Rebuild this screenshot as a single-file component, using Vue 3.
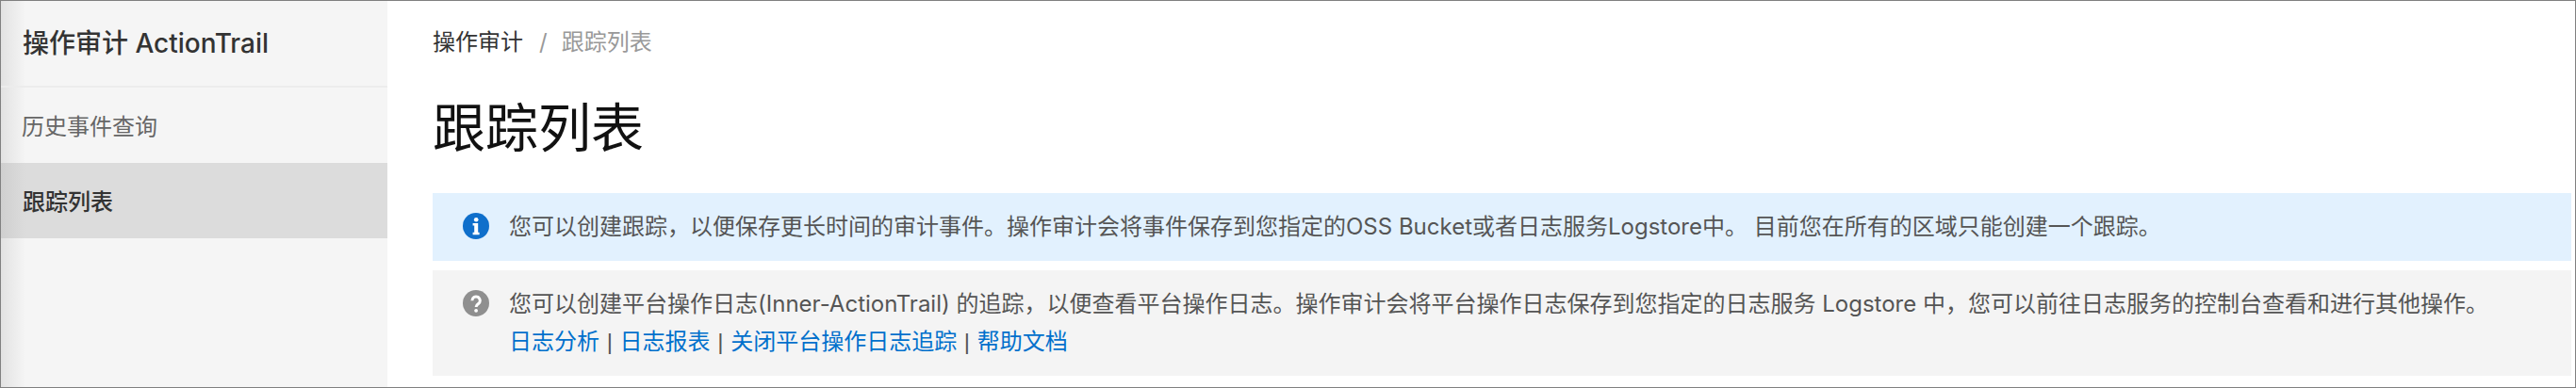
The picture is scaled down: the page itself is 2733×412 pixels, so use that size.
<script setup>
const menu = [
  { label: '历史事件查询', active: false },
  { label: '跟踪列表', active: true },
]
const links = ['日志分析', '日志报表', '关闭平台操作日志追踪', '帮助文档']
</script>

<template>
  <div class="frame">
    <aside class="side">
      <div class="side-title">操作审计 ActionTrail</div>
      <nav class="menu">
        <div v-for="m in menu" :key="m.label" class="item" :class="{ active: m.active }">{{ m.label }}</div>
      </nav>
    </aside>
    <main class="main">
      <div class="crumb">
        <span class="c1">操作审计</span>
        <span class="sep">/</span>
        <span class="c2">跟踪列表</span>
      </div>
      <h1 class="title">跟踪列表</h1>
      <div class="alert info">
        <svg class="ico" viewBox="0 0 28 28" aria-hidden="true">
          <circle cx="14" cy="14" r="14" fill="#0f6fcb" />
          <circle cx="14.2" cy="7.2" r="2.3" fill="#fff" />
          <path d="M10.6 11h5.6v9.8h1.4v2.4h-7v-2.4h1.6v-7.4h-1.6z" fill="#fff" />
        </svg>
        <div class="body">您可以创建跟踪，以便保存更长时间的审计事件。操作审计会将事件保存到您指定的OSS Bucket或者日志服务Logstore中。 目前您在所有的区域只能创建一个跟踪。</div>
      </div>
      <div class="alert help">
        <svg class="ico" viewBox="0 0 28 28" aria-hidden="true">
          <circle cx="14" cy="14" r="14" fill="#8f8f8f" />
          <path d="M9.9 11.2a4.2 4.2 0 1 1 6.6 3.4c-1.5 1-2.4 1.7-2.4 3.4" fill="none" stroke="#fff" stroke-width="3" />
          <circle cx="14.1" cy="21.8" r="1.9" fill="#fff" />
        </svg>
        <div class="body">
          <div>您可以创建平台操作日志(Inner-ActionTrail) 的追踪，以便查看平台操作日志。操作审计会将平台操作日志保存到您指定的日志服务 Logstore 中，您可以前往日志服务的控制台查看和进行其他操作。</div>
          <div class="links">
            <template v-for="(l, i) in links" :key="l">
              <span v-if="i" class="bar"> | </span><a class="link">{{ l }}</a>
            </template>
          </div>
        </div>
      </div>
    </main>
  </div>
</template>

<style>
html, body { margin: 0; background: #fff; }
</style>

<style scoped>
.frame {
  box-sizing: border-box;
  width: 2733px;
  height: 412px;
  border: 1px solid #808080;
  display: flex;
  overflow: hidden;
  font-family: Inter, "Noto Sans CJK SC", sans-serif;
  font-size: 24px;
  color: #555;
}
.side {
  width: 410px;
  flex: none;
  background: linear-gradient(to right, #e2e2e2 0, #f5f5f5 26px);
}
.side-title {
  height: 92px;
  box-sizing: border-box;
  padding-left: 23px;
  line-height: 90px;
  font-size: 28px;
  font-weight: 500;
  color: #333;
  border-bottom: 2px solid #ececec;
}
.item {
  height: 80px;
  box-sizing: border-box;
  padding: 4px 0 0 22px;
  line-height: 76px;
  color: #666;
}
.item.active {
  background: linear-gradient(to right, #cfcfcf 0, #dcdcdc 26px);
  color: #333;
  font-weight: 500;
  padding-left: 23px;
}
.main {
  flex: 1;
  min-width: 0;
  padding: 26px 4px 0 48px;
}
.crumb {
  display: flex;
  gap: 16px;
  line-height: 36px;
}
.c1 { color: #333; }
.sep { color: #999; margin: 0 -1px 0 1px; }
.c2 { color: #999; }
.title {
  margin: 35px 0 0;
  font-size: 56px;
  font-weight: 400;
  line-height: 76px;
  color: #111;
}
.alert {
  display: flex;
  margin-top: 10px;
  padding: 16px 32px;
  gap: 21px;
  box-sizing: border-box;
}
.title + .alert { margin-top: 31px; }
.info { background: #e2f1fe; }
.help { background: #f4f4f4; }
.ico {
  flex: none;
  width: 28px;
  height: 28px;
  margin-top: 5px;
}
.body {
  line-height: 40px;
  white-space: nowrap;
}
.bar { font-family: "Liberation Sans", sans-serif; color: #555; margin: 0 1px; }
.link { color: #0070cc; }
</style>
